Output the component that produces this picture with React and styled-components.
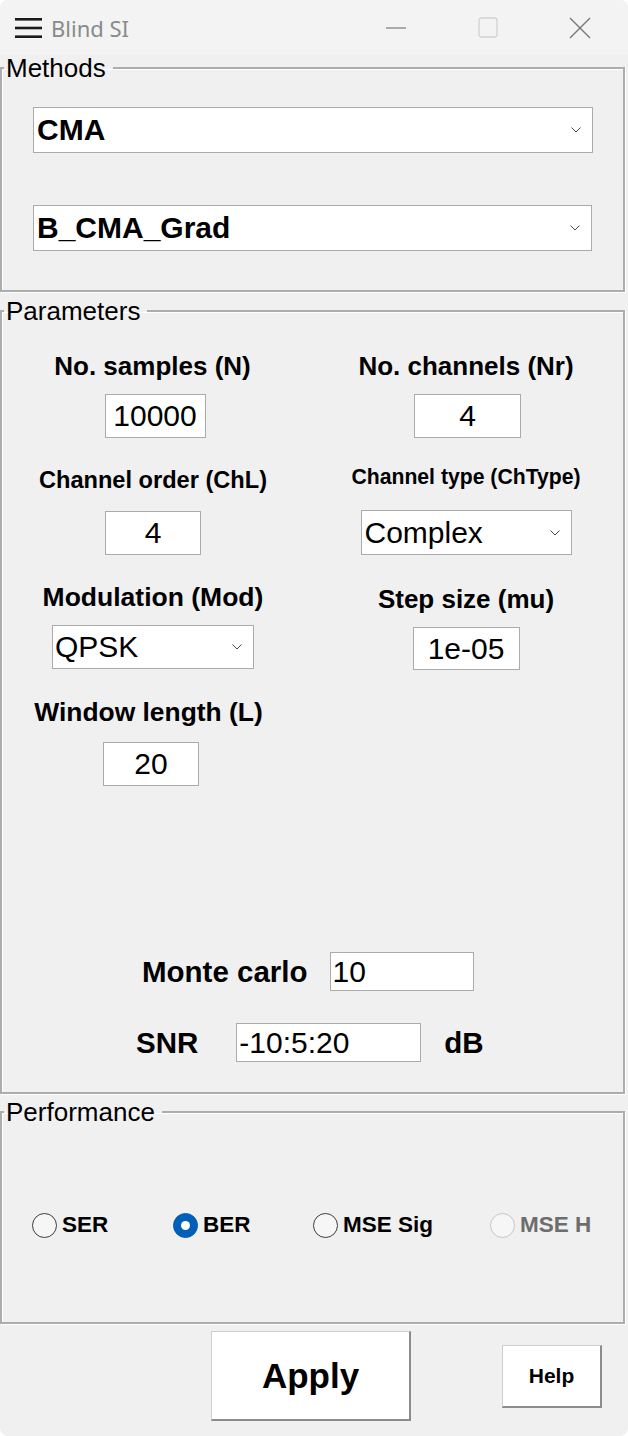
import React from 'react';
import styled, { createGlobalStyle } from 'styled-components';

const Global = createGlobalStyle`
  html, body { margin: 0; padding: 0; background: #ffffff; }
  body { font-family: "Liberation Sans", Arial, sans-serif; color: #000; }
  * { box-sizing: border-box; }
`;

const Window = styled.div`
  width: 628px;
  height: 1436px;
  background: #f0f0f0;
  border-radius: 8px;
  overflow: hidden;
  display: flex;
  flex-direction: column;
`;

const TitleBar = styled.div`
  flex: none;
  height: 55px;
  background: #f3f3f3;
  display: flex;
  align-items: center;
`;

const MenuIcon = styled.svg`
  margin-left: 15px;
  flex: none;
`;

const TitleText = styled.span`
  margin-left: 8px;
  font-family: "Noto Sans", "Open Sans", sans-serif;
  font-size: 22px;
  color: #8a8a8a;
  line-height: 1;
`;

const Caption = styled.div`
  margin-left: auto;
  margin-right: 2px;
  display: flex;
  height: 100%;
`;

const CaptionButton = styled.div`
  width: 92px;
  height: 100%;
  display: flex;
  align-items: center;
  justify-content: center;
`;

const Group = styled.fieldset`
  margin: ${(p) => p.$mt}px 3px 0 0;
  padding: ${(p) => p.$pad};
  border: 2px solid #adadad;
  min-inline-size: 0;
  box-shadow: 1px 1px 0 #ffffff, inset 1px 1px 0 #ffffff;
`;

const Legend = styled.legend`
  margin-left: 2px;
  padding: 0 7px 0 2px;
  font-size: 26px;
  line-height: 26px;
  height: 26px;
`;

const SelectBox = styled.div`
  width: ${(p) => p.$w}px;
  height: ${(p) => p.$h}px;
  background: #ffffff;
  border: 1px solid #ababab;
  display: flex;
  align-items: center;
  padding: 0 11px 0 ${(p) => p.$pl ?? 3}px;
  font-size: 30px;
  font-weight: ${(p) => (p.$bold ? 700 : 400)};
  white-space: nowrap;
`;

const SelectValue = styled.span`
  flex: 1;
`;

const MethodsStack = styled.div`
  display: flex;
  flex-direction: column;
  gap: 52px;
  padding-left: 31px;
`;

const ParamGrid = styled.div`
  display: grid;
  grid-template-columns: 302px 319px;
  row-gap: 27px;
  align-items: start;
`;

const Cell = styled.div`
  display: flex;
  flex-direction: column;
  align-items: center;
  gap: ${(p) => p.$gap}px;
  padding-left: ${(p) => p.$dx ?? 0}px;
  padding-right: ${(p) => p.$dr ?? 0}px;
`;

const Label = styled.div`
  height: 30px;
  display: flex;
  align-items: center;
  font-size: ${(p) => p.$size}px;
  font-weight: 700;
  white-space: nowrap;
  margin-top: ${(p) => p.$mt ?? 0}px;
  margin-right: ${(p) => p.$mr ?? 0}px;
`;

const Field = styled.input`
  width: ${(p) => p.$w}px;
  height: ${(p) => p.$h}px;
  border: 1px solid #ababab;
  border-radius: 0;
  background: #ffffff;
  font-family: "Liberation Sans", Arial, sans-serif;
  font-size: 30px;
  color: #000;
  text-align: ${(p) => p.$align || 'center'};
  padding: 0 2px;
  margin: 0;
  outline: none;
  margin-left: ${(p) => p.$ml ?? 0}px;
`;

const InlineRow = styled.div`
  display: flex;
  align-items: center;
  height: 39px;
  padding-left: ${(p) => p.$pl}px;
  margin-top: ${(p) => p.$mt}px;
`;

const BigLabel = styled.span`
  font-size: 29.5px;
  font-weight: 700;
  margin-right: ${(p) => p.$mr ?? 0}px;
  margin-left: ${(p) => p.$ml ?? 0}px;
  white-space: nowrap;
`;

const RadioRow = styled.div`
  display: grid;
  grid-template-columns: 141px 140px 177px auto;
  padding-left: 30px;
  height: 30px;
  align-items: center;
`;

const RadioItem = styled.label`
  display: flex;
  align-items: center;
  gap: 5px;
  font-size: 22.5px;
  font-weight: 700;
  color: ${(p) => (p.$disabled ? '#6d6d6d' : '#000')};
  white-space: nowrap;
`;

const RadioCircle = styled.span`
  width: 25px;
  height: 25px;
  border-radius: 50%;
  flex: none;
  display: flex;
  align-items: center;
  justify-content: center;
  background: ${(p) => (p.$checked ? '#005fb8' : '#f6f6f6')};
  border: 1.5px solid
    ${(p) => (p.$checked ? '#005fb8' : p.$disabled ? '#c6c6c6' : '#3d3d3d')};
`;

const RadioDot = styled.span`
  width: 9px;
  height: 9px;
  border-radius: 50%;
  background: #ffffff;
`;

const ButtonBar = styled.div`
  display: flex;
  align-items: center;
  padding-top: 7px;
`;

const PushButton = styled.button`
  width: ${(p) => p.$w}px;
  height: ${(p) => p.$h}px;
  margin-left: ${(p) => p.$ml}px;
  background: #ffffff;
  border-style: solid;
  border-width: 1px 2px 2px 1px;
  border-color: #cfcfcf #8c8c8c #8c8c8c #cfcfcf;
  font-family: "Liberation Sans", Arial, sans-serif;
  font-weight: 700;
  font-size: ${(p) => p.$fs}px;
  color: #000;
  padding: 0;
`;

const Chevron = () => (
  <svg width="10" height="6" viewBox="0 0 10 6">
    <path d="M0.5 0.5 L5 5 L9.5 0.5" fill="none" stroke="#4a4a4a" strokeWidth="1" />
  </svg>
);

const Select = ({ value, w, h, bold, pl }) => (
  <SelectBox $w={w} $h={h} $bold={bold} $pl={pl} role="combobox">
    <SelectValue>{value}</SelectValue>
    <Chevron />
  </SelectBox>
);

const Radio = ({ label, checked, disabled }) => (
  <RadioItem $disabled={disabled}>
    <RadioCircle $checked={checked} $disabled={disabled}>
      {checked && <RadioDot />}
    </RadioCircle>
    {label}
  </RadioItem>
);

export default function App() {
  return (
    <>
      <Global />
      <Window>
        <TitleBar>
          <MenuIcon width="28" height="22" viewBox="0 0 28 22">
            <rect x="0" y="1" width="27" height="2.6" fill="#1a1a1a" />
            <rect x="0" y="9.7" width="27" height="2.6" fill="#1a1a1a" />
            <rect x="0" y="18.4" width="27" height="2.6" fill="#1a1a1a" />
          </MenuIcon>
          <TitleText>Blind SI</TitleText>
          <Caption>
            <CaptionButton>
              <svg width="22" height="4" viewBox="0 0 22 4">
                <line x1="1" y1="2" x2="21" y2="2" stroke="#8c8c8c" strokeWidth="1.4" />
              </svg>
            </CaptionButton>
            <CaptionButton>
              <svg width="20" height="21" viewBox="0 0 20 21">
                <rect x="1" y="1" width="18" height="19" rx="2.5" fill="none" stroke="#d2d2d2" strokeWidth="1.3" />
              </svg>
            </CaptionButton>
            <CaptionButton>
              <svg width="22" height="22" viewBox="0 0 22 22">
                <path d="M1 1 L21 21 M21 1 L1 21" stroke="#777" strokeWidth="1.4" />
              </svg>
            </CaptionButton>
          </Caption>
        </TitleBar>

        <Group $mt={0} $pad="26px 0 39px 0">
          <Legend>Methods</Legend>
          <MethodsStack>
            <Select value="CMA" w={560} h={46} bold />
            <Select value="B_CMA_Grad" w={559} h={46} bold />
          </MethodsStack>
        </Group>

        <Group $mt={6} $pad="27px 0 30px 0">
          <Legend>Parameters</Legend>
          <ParamGrid>
            <Cell $gap={13} $dx={4}>
              <Label $size={26} $mr={5}>No. samples (N)</Label>
              <Field $w={101} $h={44} defaultValue="10000" readOnly />
            </Cell>
            <Cell $gap={13} $dx={5}>
              <Label $size={26}>No. channels (Nr)</Label>
              <Field $w={107} $h={44} defaultValue="4" readOnly $ml={3} />
            </Cell>
            <Cell $gap={16}>
              <Label $size={23.6}>Channel order (ChL)</Label>
              <Field $w={96} $h={44} defaultValue="4" readOnly />
            </Cell>
            <Cell $gap={18} $dx={5}>
              <Label $size={21.2} $mt={-3}>Channel type (ChType)</Label>
              <Select value="Complex" w={211} h={45} pl={3} />
            </Cell>
            <Cell $gap={13}>
              <Label $size={26.5}>Modulation (Mod)</Label>
              <Select value="QPSK" w={202} h={44} pl={2} />
            </Cell>
            <Cell $gap={13} $dx={5}>
              <Label $size={26} $mt={2}>Step size (mu)</Label>
              <Field $w={107} $h={43} defaultValue="1e-05" readOnly />
            </Cell>
            <Cell $gap={15} $dr={9}>
              <Label $size={26.4}>Window length (L)</Label>
              <Field $w={96} $h={44} defaultValue="20" readOnly $ml={5} />
            </Cell>
          </ParamGrid>

          <InlineRow $pl={140} $mt={166}>
            <BigLabel $mr={22}>Monte carlo</BigLabel>
            <Field $w={144} $h={39} defaultValue="10" readOnly $align="left" />
          </InlineRow>
          <InlineRow $pl={134} $mt={32}>
            <BigLabel $mr={38}>SNR</BigLabel>
            <Field $w={185} $h={39} defaultValue="-10:5:20" readOnly $align="left" />
            <BigLabel $ml={23}>dB</BigLabel>
          </InlineRow>
        </Group>

        <Group $mt={5} $pad="85px 0 82px 0">
          <Legend>Performance</Legend>
          <RadioRow>
            <Radio label="SER" />
            <Radio label="BER" checked />
            <Radio label="MSE Sig" />
            <Radio label="MSE H" disabled />
          </RadioRow>
        </Group>

        <ButtonBar>
          <PushButton $w={200} $h={90} $ml={211} $fs={35}>Apply</PushButton>
          <PushButton $w={100} $h={63} $ml={91} $fs={21}>Help</PushButton>
        </ButtonBar>
      </Window>
    </>
  );
}
